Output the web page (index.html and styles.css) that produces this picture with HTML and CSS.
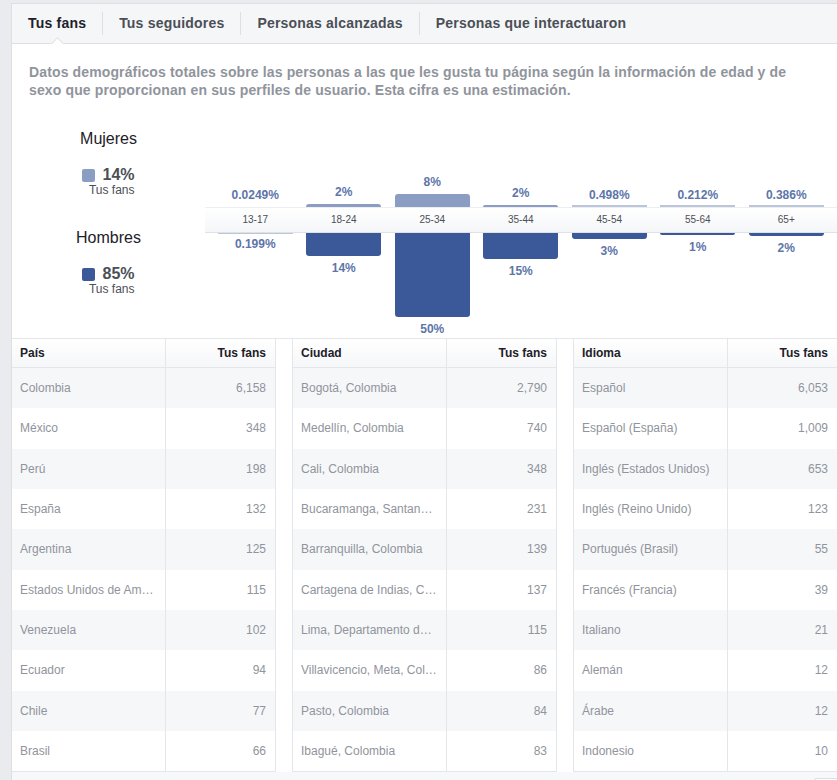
FILE: index.html
```html
<!DOCTYPE html>
<html lang="es">
<head>
<meta charset="utf-8">
<title>Tus fans</title>
<link rel="stylesheet" href="styles.css">
</head>
<body>
<div class="panel">
  <div class="tabs">
    <div class="tab active"><span>Tus fans</span></div>
    <div class="tab"><span>Tus seguidores</span></div>
    <div class="tab"><span>Personas alcanzadas</span></div>
    <div class="tab last"><span>Personas que interactuaron</span></div>
  </div>
  <p class="desc">Datos demográficos totales sobre las personas a las que les gusta tu página según la información de edad y de sexo que proporcionan en sus perfiles de usuario. Esta cifra es una estimación.</p>

  <div class="chart-section">
    <div class="legend">
      <div class="legend-title">Mujeres</div>
      <div class="legend-block">
        <div class="legend-row"><span class="sq female"></span><span class="pct">14%</span></div>
        <div class="legend-sub">Tus fans</div>
      </div>
      <div class="legend-title second">Hombres</div>
      <div class="legend-block">
        <div class="legend-row"><span class="sq male"></span><span class="pct">85%</span></div>
        <div class="legend-sub">Tus fans</div>
      </div>
    </div>
    <div class="chart">
      <div class="row-top">
        <div class="col"><span class="val">0.0249%</span><span class="bar f" style="height:0px"></span></div>
        <div class="col"><span class="val">2%</span><span class="bar f" style="height:3px"></span></div>
        <div class="col"><span class="val">8%</span><span class="bar f" style="height:13px"></span></div>
        <div class="col"><span class="val">2%</span><span class="bar f" style="height:2px"></span></div>
        <div class="col"><span class="val tight">0.498%</span><span class="bar f light" style="height:2px"></span></div>
        <div class="col"><span class="val tight">0.212%</span><span class="bar f light" style="height:2px"></span></div>
        <div class="col"><span class="val tight">0.386%</span><span class="bar f light" style="height:2px"></span></div>
      </div>
      <div class="band">
        <div class="age">13-17</div>
        <div class="age">18-24</div>
        <div class="age">25-34</div>
        <div class="age">35-44</div>
        <div class="age">45-54</div>
        <div class="age">55-64</div>
        <div class="age">65+</div>
      </div>
      <div class="row-bottom">
        <div class="col"><span class="bar m light" style="height:1px"></span><span class="val tight">0.199%</span></div>
        <div class="col"><span class="bar m" style="height:23px"></span><span class="val">14%</span></div>
        <div class="col"><span class="bar m" style="height:84px"></span><span class="val">50%</span></div>
        <div class="col"><span class="bar m" style="height:26px"></span><span class="val">15%</span></div>
        <div class="col"><span class="bar m" style="height:6px"></span><span class="val">3%</span></div>
        <div class="col"><span class="bar m" style="height:2px"></span><span class="val">1%</span></div>
        <div class="col"><span class="bar m" style="height:3px"></span><span class="val">2%</span></div>
      </div>
    </div>
  </div>

  <div class="tables">
    <div class="tbl first">
      <div class="th">País</div><div class="th num">Tus fans</div>
      <div class="td">Colombia</div><div class="td num">6,158</div>
      <div class="td">México</div><div class="td num">348</div>
      <div class="td">Perú</div><div class="td num">198</div>
      <div class="td">España</div><div class="td num">132</div>
      <div class="td">Argentina</div><div class="td num">125</div>
      <div class="td">Estados Unidos de América</div><div class="td num">115</div>
      <div class="td">Venezuela</div><div class="td num">102</div>
      <div class="td">Ecuador</div><div class="td num">94</div>
      <div class="td">Chile</div><div class="td num">77</div>
      <div class="td">Brasil</div><div class="td num">66</div>
    </div>
    <div class="tbl">
      <div class="th">Ciudad</div><div class="th num">Tus fans</div>
      <div class="td">Bogotá, Colombia</div><div class="td num">2,790</div>
      <div class="td">Medellín, Colombia</div><div class="td num">740</div>
      <div class="td">Cali, Colombia</div><div class="td num">348</div>
      <div class="td">Bucaramanga, Santander</div><div class="td num">231</div>
      <div class="td">Barranquilla, Colombia</div><div class="td num">139</div>
      <div class="td">Cartagena de Indias, Colombia</div><div class="td num">137</div>
      <div class="td">Lima, Departamento de Lima</div><div class="td num">115</div>
      <div class="td">Villavicencio, Meta, Colombia</div><div class="td num">86</div>
      <div class="td">Pasto, Colombia</div><div class="td num">84</div>
      <div class="td">Ibagué, Colombia</div><div class="td num">83</div>
    </div>
    <div class="tbl">
      <div class="th">Idioma</div><div class="th num">Tus fans</div>
      <div class="td">Español</div><div class="td num">6,053</div>
      <div class="td">Español (España)</div><div class="td num">1,009</div>
      <div class="td">Inglés (Estados Unidos)</div><div class="td num">653</div>
      <div class="td">Inglés (Reino Unido)</div><div class="td num">123</div>
      <div class="td">Portugués (Brasil)</div><div class="td num">55</div>
      <div class="td">Francés (Francia)</div><div class="td num">39</div>
      <div class="td">Italiano</div><div class="td num">21</div>
      <div class="td">Alemán</div><div class="td num">12</div>
      <div class="td">Árabe</div><div class="td num">12</div>
      <div class="td">Indonesio</div><div class="td num">10</div>
    </div>
  </div>
  <div class="footer"><div class="footer-box"></div></div>
</div>
</body>
</html>
```

FILE: styles.css
```css
html, body {
  margin: 0;
  padding: 0;
  overflow: hidden;
}
body {
  background: #e9ebee;
  font-family: "Liberation Sans", Arial, Helvetica, sans-serif;
  color: #1d2129;
  height: 780px;
}
.panel {
  margin: 3px 0 0 11px;
  width: 828px;
  background: #fff;
  border-left: 1px solid #dddfe2;
  border-top: 1px solid #dddfe2;
  box-sizing: border-box;
}
.tabs {
  display: flex;
  height: 39px;
  align-items: center;
  background: #f5f6f7;
  border-bottom: 1px solid #dddfe2;
}
.tab {
  position: relative;
  height: 39px;
  display: flex;
  align-items: center;
}
.tab span {
  display: block;
  padding: 0 16px;
  font-size: 14px;
  font-weight: bold;
  letter-spacing: 0.2px;
  color: #4b4f56;
  line-height: 23px;
  border-right: 1px solid #dddfe2;
}
.tab.last span { border-right: none; }
.tab.active span { color: #1d2129; }
.tab.active::after {
  content: "";
  position: absolute;
  left: calc(50% - 5px);
  top: 35px;
  width: 8px;
  height: 8px;
  background: #fff;
  border-left: 1px solid #dddfe2;
  border-top: 1px solid #dddfe2;
  transform: rotate(45deg);
}
.desc {
  margin: 0;
  width: 792px;
  padding: 19px 0 0 17px;
  font-size: 14px;
  font-weight: bold;
  letter-spacing: 0.13px;
  line-height: 18px;
  color: #90949c;
}
.chart-section {
  display: flex;
  height: 239px;
  border-bottom: 1px solid #e5e6e9;
}
.legend {
  width: 193px;
  display: flex;
  flex-direction: column;
  align-items: center;
  padding-top: 30px;
}
.legend-title {
  font-size: 16px;
  line-height: 20px;
  color: #1d2129;
}
.legend-title.second { margin-top: 30px; }
.legend-block {
  margin-top: 18px;
  text-align: right;
}
.legend-row {
  display: flex;
  align-items: center;
  line-height: 16px;
  height: 16px;
}
.sq {
  width: 13px;
  height: 13px;
  border-radius: 2px;
  margin-right: 7px;
}
.sq.female { background: #8b9dc3; }
.sq.male { background: #3b5998; }
.pct {
  font-size: 16px;
  font-weight: bold;
  color: #4b4f56;
}
.legend-sub {
  font-size: 12px;
  line-height: 15px;
  color: #4b4f56;
}
.chart {
  flex: 1;
  display: flex;
  flex-direction: column;
}
.row-top, .band, .row-bottom {
  display: grid;
  grid-template-columns: repeat(7, 88.5px);
  padding-left: 6px;
}
.row-top { height: 108px; }
.row-bottom { height: 105px; }
.col {
  display: flex;
  flex-direction: column;
  align-items: center;
}
.row-top .col { justify-content: flex-end; }
.row-bottom .col { justify-content: flex-start; }
.bar {
  display: block;
  width: 75px;
}
.bar.f {
  background: #8b9dc3;
  border-radius: 3px 3px 0 0;
}
.bar.m {
  background: #3b5998;
  border-radius: 0 0 3px 3px;
}
.bar.light { background: #bcc6da; border-radius: 0; }
.val {
  font-size: 12px;
  font-weight: bold;
  line-height: 14px;
  color: #5d75a9;
}
.row-top .val { margin-bottom: 5px; }
.row-top .val.tight { margin-bottom: 3px; }
.row-bottom .val { margin-top: 5px; }
.row-bottom .val.tight { margin-top: 3px; }
.band {
  height: 24px;
  border-top: 1px solid #eceef1;
  border-bottom: 1px solid #dfe1e5;
  background: linear-gradient(#ffffff, #f5f6f8);
}
.age {
  text-align: center;
  font-size: 10px;
  line-height: 24px;
  color: #4b4f56;
}
.tables {
  display: flex;
  gap: 16px;
}
.tbl {
  flex-shrink: 0;
  display: grid;
  grid-template-columns: 154px 109px;
  grid-auto-rows: 40.33px;
  grid-template-rows: 29px;
  border-left: 1px solid #e5e6e9;
  border-right: 1px solid #e5e6e9;
  border-bottom: 1px solid #e5e6e9;
}
.tbl.first { border-left: none; }
.th, .td {
  font-size: 12px;
  padding: 0 9px 0 8px;
  display: flex;
  align-items: center;
  min-width: 0;
}
.th {
  font-weight: bold;
  color: #1d2129;
  background: linear-gradient(#ffffff, #f6f7f9);
  border-bottom: 1px solid #e5e6e9;
}
.th:nth-child(odd), .td:nth-child(odd) {
  border-right: 1px solid #e5e6e9;
}
.td {
  color: #90949c;
  display: block;
  line-height: 40.33px;
  white-space: nowrap;
  overflow: hidden;
  text-overflow: ellipsis;
}
.num { justify-content: flex-end; text-align: right; }
.td:nth-child(4n+3), .td:nth-child(4n+4) { background: #f6f7f9; }
.footer {
  height: 20px;
  background: #f7f8fa;
  display: flex;
  justify-content: flex-end;
}
.footer-box {
  margin-top: 6px;
  margin-right: 2px;
  width: 22px;
  height: 20px;
  background: #fff;
  border: 1px solid #dddfe2;
  border-radius: 3px 0 0 0;
  border-right: none;
}
```
